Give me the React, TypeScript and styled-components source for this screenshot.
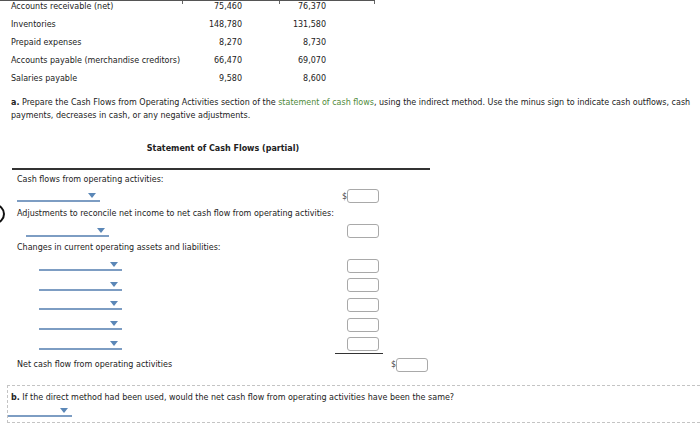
import React from 'react'
import styled, { createGlobalStyle } from 'styled-components'

const GlobalStyle = createGlobalStyle`
  html, body {
    margin: 0;
    padding: 0;
    background: #ffffff;
  }
  body {
    font-family: 'DejaVu Sans', Verdana, sans-serif;
    font-size: 8px;
    color: #222;
    width: 700px;
    height: 434px;
    overflow: hidden;
  }
`

type Row = { label: string; a: string; b: string }

const linhas: Row[] = [
  { label: 'Accounts receivable (net)', a: '75,460', b: '76,370' },
  { label: 'Inventories', a: '148,780', b: '131,580' },
  { label: 'Prepaid expenses', a: '8,270', b: '8,730' },
  { label: 'Accounts payable (merchandise creditors)', a: '66,470', b: '69,070' },
  { label: 'Salaries payable', a: '9,580', b: '8,600' },
]

function Dropdown({ $indent = 0, $width = 83 }: { $indent?: number; $width?: number }) {
  return (
    <Select $indent={$indent} $width={$width}>
      <Arrow />
    </Select>
  )
}

export default function App() {
  return (
    <Page>
      <GlobalStyle />
      <DataTable>
        <TickRow>
          <TickCell $w={183} />
          <TickCell $w={97} />
          <TickCell $w={95} />
        </TickRow>
        <Rows>
          {linhas.map(l => (
            <DataRow key={l.label}>
              <LabelCell>{l.label}</LabelCell>
              <NumCell $w={97} $pad={38}>{l.a}</NumCell>
              <NumCell $w={95} $pad={49}>{l.b}</NumCell>
            </DataRow>
          ))}
        </Rows>
      </DataTable>

      <Instruction>
        <b>a.</b> Prepare the Cash Flows from Operating Activities section of the{' '}
        <Link>statement of cash flows</Link>, using the indirect method. Use the minus sign to indicate
        cash outflows, cash payments, decreases in cash, or any negative adjustments.
      </Instruction>

      <Title>Statement of Cash Flows (partial)</Title>

      <Statement>
        <TextRow $h={12}>Cash flows from operating activities:</TextRow>
        <InputRow $h={20}>
          <Dropdown />
          <Col1>
            <Dollar>$</Dollar>
            <Box />
          </Col1>
          <Col2 />
        </InputRow>
        <TextRow $h={16}>
          <Marker />
          Adjustments to reconcile net income to net cash flow from operating activities:
        </TextRow>
        <InputRow $h={18}>
          <Dropdown $indent={9} />
          <Col1>
            <Box />
          </Col1>
          <Col2 />
        </InputRow>
        <TextRow $h={16}>Changes in current operating assets and liabilities:</TextRow>
        {[0, 1, 2, 3, 4].map(i => (
          <InputRow key={i} $h={19.6}>
            <Dropdown $indent={22} />
            <Col1 $rule={i === 4}>
              <Box />
            </Col1>
            <Col2 />
          </InputRow>
        ))}
        <InputRow $h={22}>
          <NetLabel>Net cash flow from operating activities</NetLabel>
          <Col1 />
          <Col2>
            <Dollar>$</Dollar>
            <Box />
          </Col2>
        </InputRow>
      </Statement>

      <PartB>
        <div>
          <b>b.</b> If the direct method had been used, would the net cash flow from operating activities have
          been the same?
        </div>
        <BSelect>
          <Dropdown $width={64} />
        </BSelect>
      </PartB>
    </Page>
  )
}

const Page = styled.div`
  width: 700px;
  height: 434px;
`

const DataTable = styled.div`
  width: 375px;
`

const TickRow = styled.div`
  display: flex;
  height: 3px;
  border-top: 1px solid #555;
`

const TickCell = styled.div<{ $w: number }>`
  width: ${p => p.$w}px;
  border-right: 1px solid #666;
  box-sizing: border-box;
`

const Rows = styled.div`
  margin-top: -6px;
`

const DataRow = styled.div`
  display: flex;
  height: 18px;
  line-height: 18px;
`

const LabelCell = styled.div`
  width: 172px;
  padding-left: 11px;
  white-space: nowrap;
`

const NumCell = styled.div<{ $w: number; $pad: number }>`
  width: ${p => p.$w}px;
  box-sizing: border-box;
  padding-right: ${p => p.$pad}px;
  text-align: right;
`

const Instruction = styled.p`
  margin: 8px 0 0 11px;
  width: 690px;
  line-height: 13px;
`

const Link = styled.span`
  color: #4f8a3a;
`

const Title = styled.div`
  margin-top: 21px;
  width: 446px;
  text-align: center;
  font-weight: bold;
  line-height: 12px;
`

const Statement = styled.div`
  margin: 13px 0 0 12px;
  width: 418px;
  border-top: 2px solid #333;
  padding-top: 4px;
`

const TextRow = styled.div<{ $h: number }>`
  position: relative;
  height: ${p => p.$h}px;
  line-height: ${p => p.$h}px;
  padding-left: 5px;
  white-space: nowrap;
`

const Marker = styled.span`
  position: absolute;
  left: -27px;
  top: 50%;
  transform: translateY(-50%);
  width: 16px;
  height: 16px;
  border: 2px solid #111;
  border-radius: 50%;
`

const InputRow = styled.div<{ $h: number }>`
  display: grid;
  grid-template-columns: 323px 48px 47px;
  height: ${p => p.$h}px;
  align-items: center;
`

const NetLabel = styled.div`
  padding-left: 5px;
  white-space: nowrap;
`

const Select = styled.div<{ $indent: number; $width: number }>`
  position: relative;
  margin-left: ${p => 5 + p.$indent}px;
  width: ${p => p.$width}px;
  height: 9px;
  border-bottom: 2px solid #7d9dc3;
`

const Arrow = styled.span`
  position: absolute;
  right: 4px;
  top: 2px;
  width: 0;
  height: 0;
  border-left: 4px solid transparent;
  border-right: 4px solid transparent;
  border-top: 5px solid #5b87b7;
`

const Col1 = styled.div<{ $rule?: boolean }>`
  display: flex;
  justify-content: flex-end;
  align-items: center;
  height: 100%;
  padding-right: 4px;
  box-sizing: border-box;
  border-bottom: ${p => (p.$rule ? '1px solid #333' : 'none')};
`

const Col2 = styled.div`
  display: flex;
  justify-content: flex-end;
  align-items: center;
  padding-right: 2px;
`

const Dollar = styled.span`
  font-size: 8px;
  color: #444;
`

const Box = styled.div`
  width: 32px;
  height: 14px;
  box-sizing: border-box;
  border: 1px solid #a9a9a9;
  border-radius: 3px;
  background: #fff;
`

const PartB = styled.div`
  margin: 9px 0 0 7px;
  height: 38px;
  border: 1px dashed #c4c4c4;
  border-right: none;
  padding: 6px 0 0 3px;
  box-sizing: border-box;
  line-height: 12px;
`

const BSelect = styled.div`
  margin: 2px 0 0 -8px;
`
